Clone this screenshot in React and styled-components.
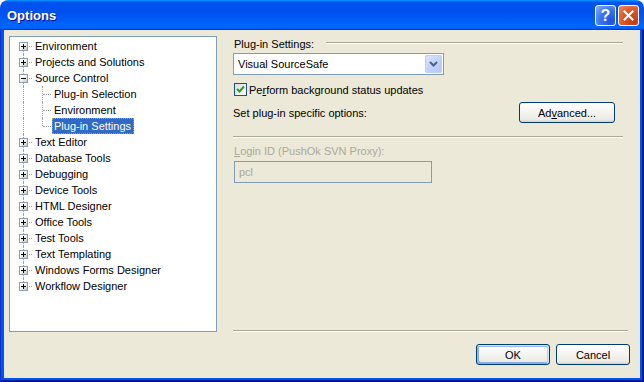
import React from "react";
import styled, { createGlobalStyle, css } from "styled-components";

const GlobalStyle = createGlobalStyle`
  html, body {
    margin: 0;
    padding: 0;
    background: #ffffff;
  }
  body {
    font-family: "Liberation Sans", Arial, sans-serif;
    font-size: 11px;
    color: #000000;
  }
  * {
    box-sizing: border-box;
  }
`;

const treeItems = [
  { label: "Environment", expander: "plus" },
  { label: "Projects and Solutions", expander: "plus" },
  {
    label: "Source Control",
    expander: "minus",
    children: [
      { label: "Plug-in Selection" },
      { label: "Environment" },
      { label: "Plug-in Settings", selected: true },
    ],
  },
  { label: "Text Editor", expander: "plus" },
  { label: "Database Tools", expander: "plus" },
  { label: "Debugging", expander: "plus" },
  { label: "Device Tools", expander: "plus" },
  { label: "HTML Designer", expander: "plus" },
  { label: "Office Tools", expander: "plus" },
  { label: "Test Tools", expander: "plus" },
  { label: "Text Templating", expander: "plus" },
  { label: "Windows Forms Designer", expander: "plus" },
  { label: "Workflow Designer", expander: "plus" },
];

const App = () => (
  <>
    <GlobalStyle />
    <Window>
      <TitleBar>
        <Title>Options</Title>
        <CaptionButtons>
          <CaptionButton $variant="help">?</CaptionButton>
          <CaptionButton $variant="close">
            <svg width="11" height="11" viewBox="0 0 11 11">
              <path d="M1.5 1.5 L9.5 9.5 M9.5 1.5 L1.5 9.5" stroke="#fff" strokeWidth="2" strokeLinecap="square" />
            </svg>
          </CaptionButton>
        </CaptionButtons>
      </TitleBar>
      <Frame>
        <Client>
          <TreePanel>
            {treeItems.map((item, i) => {
              const first = i === 0;
              const last = i === treeItems.length - 1;
              return (
                <React.Fragment key={item.label + i}>
                  <Row>
                    <Slot $first={first} $last={last} $branch>
                      <Expander $minus={item.expander === "minus"} />
                    </Slot>
                    <Label>{item.label}</Label>
                  </Row>
                  {item.children &&
                    item.children.map((child, j) => (
                      <Row key={child.label + j}>
                        <Slot $guide={!last} />
                        <Slot $last={j === item.children.length - 1} $branch />
                        <Label $selected={child.selected}>{child.label}</Label>
                      </Row>
                    ))}
                </React.Fragment>
              );
            })}
          </TreePanel>
          <RightPane>
            <GroupHeader>
              <span>Plug-in Settings:</span>
              <Etch />
            </GroupHeader>
            <Combo>
              <ComboText>Visual SourceSafe</ComboText>
              <ComboButton>
                <svg width="9" height="6" viewBox="0 0 9 6">
                  <path d="M1 1 L4.5 4.5 L8 1" stroke="#4D6185" strokeWidth="2" fill="none" />
                </svg>
              </ComboButton>
            </Combo>
            <CheckRow>
              <CheckBox>
                <svg width="9" height="9" viewBox="0 0 9 9">
                  <path d="M1 4 L3.5 6.5 L8 1.5" stroke="#21A121" strokeWidth="2" fill="none" />
                </svg>
              </CheckBox>
              <span>
                Pe<u>r</u>form background status updates
              </span>
            </CheckRow>
            <OptionRow>
              <span>Set plug-in specific options:</span>
              <Button $w={96}>
                Ad<u>v</u>anced...
              </Button>
            </OptionRow>
            <Etch $block $end={7} $top={13} />
            <DisabledLabel>
              <u>L</u>ogin ID (PushOk SVN Proxy):
            </DisabledLabel>
            <DisabledInput>pcl</DisabledInput>
            <Spacer />
            <Etch $block $end={2} />
            <ButtonRow>
              <Button $w={74} $default>
                OK
              </Button>
              <Button $w={74}>Cancel</Button>
            </ButtonRow>
          </RightPane>
        </Client>
      </Frame>
    </Window>
  </>
);

const Window = styled.div`
  width: 644px;
  height: 382px;
  display: flex;
  flex-direction: column;
`;

const TitleBar = styled.div`
  height: 30px;
  flex: none;
  display: flex;
  align-items: center;
  justify-content: space-between;
  padding: 1px 5px 0 7px;
  border-radius: 8px 8px 0 0;
  background: linear-gradient(
    180deg,
    #0997ff,
    #0053ee 8%,
    #0050ee 40%,
    #0066ff 88%,
    #0066ff 93%,
    #005bff 95%,
    #003dd7 96%,
    #003dd7
  );
`;

const Title = styled.span`
  color: #ffffff;
  font-family: "Liberation Sans", Arial, sans-serif;
  font-weight: bold;
  font-size: 13px;
  text-shadow: 1px 1px #0f1089;
`;

const CaptionButtons = styled.div`
  display: flex;
  gap: 2px;
`;

const CaptionButton = styled.span`
  width: 21px;
  height: 21px;
  border: 1px solid #ffffff;
  border-radius: 3px;
  display: flex;
  align-items: center;
  justify-content: center;
  color: #ffffff;
  font-family: "Liberation Sans", Arial, sans-serif;
  font-weight: bold;
  font-size: 16px;
  ${p =>
    p.$variant === "close"
      ? css`
          background: radial-gradient(circle at 80% 80%, #c23a10 0%, #dd5a25 55%, #e98d6a 100%);
        `
      : css`
          background: radial-gradient(circle at 80% 80%, #1f52e0 0%, #3b78f0 55%, #8db2f8 100%);
        `}
`;

const Frame = styled.div`
  flex: 1;
  display: flex;
  padding: 0 4px 4px 4px;
  background: #0055e5;
  box-shadow: inset 1px 0 #0831d9, inset -1px -1px #00138c, inset -2px -2px #001ea0;
`;

const Client = styled.div`
  flex: 1;
  display: flex;
  background: #ece9d8;
  padding: 6px 10px 13px 5px;
`;

const TreePanel = styled.div`
  width: 208px;
  height: 296px;
  flex: none;
  align-self: flex-start;
  background: #ffffff;
  border: 1px solid #7f9db9;
  padding: 1px 0 0 4px;
  overflow: hidden;
`;

const Row = styled.div`
  display: flex;
  align-items: center;
  height: 16px;
  white-space: nowrap;
`;

const Slot = styled.span`
  position: relative;
  width: 19px;
  height: 16px;
  flex: none;

  &::before {
    content: "";
    display: ${p => (p.$branch || p.$guide ? "block" : "none")};
    position: absolute;
    left: 9px;
    top: ${p => (p.$first ? "8px" : "0")};
    bottom: ${p => (p.$last ? "8px" : "0")};
    border-left: 1px dotted #a0a0a0;
  }

  &::after {
    content: "";
    display: ${p => (p.$branch ? "block" : "none")};
    position: absolute;
    left: 10px;
    top: 8px;
    width: 8px;
    border-top: 1px dotted #a0a0a0;
  }
`;

const Expander = styled.span`
  position: absolute;
  left: 5px;
  top: 4px;
  width: 9px;
  height: 9px;
  z-index: 1;
  border: 1px solid #8d9db4;
  background: linear-gradient(135deg, #ffffff 35%, #c8c4b4 100%);

  &::before {
    content: "";
    position: absolute;
    left: 1px;
    top: 3px;
    width: 5px;
    height: 1px;
    background: #000000;
  }

  &::after {
    content: "";
    display: ${p => (p.$minus ? "none" : "block")};
    position: absolute;
    left: 3px;
    top: 1px;
    width: 1px;
    height: 5px;
    background: #000000;
  }
`;

const Label = styled.span`
  height: 16px;
  line-height: 14px;
  padding: 0 2px 0 1px;
  border: 1px solid transparent;
  ${p =>
    p.$selected &&
    css`
      background: #316ac5;
      color: #ffffff;
      border: 1px dotted #ce953a;
    `}
`;

const RightPane = styled.div`
  flex: 1;
  margin-left: 16px;
  display: flex;
  flex-direction: column;
`;

const GroupHeader = styled.div`
  display: flex;
  align-items: flex-start;
  margin-top: 1px;
  height: 14px;
  line-height: 14px;
  padding-left: 1px;
`;

const Etch = styled.div`
  flex: ${p => (p.$block ? "none" : "1")};
  height: 2px;
  border-top: 1px solid #aca899;
  border-bottom: 1px solid #ffffff;
  margin: ${p => (p.$block ? `${p.$top || 0}px ${p.$end}px 0 0` : "5px 7px 0 12px")};
`;

const Combo = styled.div`
  display: flex;
  align-items: center;
  width: 211px;
  height: 22px;
  margin-top: 2px;
  padding: 1px;
  background: #ffffff;
  border: 1px solid #7f9db9;
`;

const ComboText = styled.span`
  flex: 1;
  padding-left: 3px;
`;

const ComboButton = styled.span`
  width: 17px;
  height: 18px;
  display: flex;
  align-items: center;
  justify-content: center;
  border: 1px solid #bccdf7;
  border-radius: 2px;
  background: linear-gradient(135deg, #dce6fd 0%, #c2d3fc 50%, #b3c7f6 100%);
`;

const CheckRow = styled.div`
  display: flex;
  align-items: center;
  gap: 2px;
  margin-top: 8px;
  height: 13px;
  padding-left: 1px;
`;

const CheckBox = styled.span`
  width: 13px;
  height: 13px;
  display: flex;
  align-items: center;
  justify-content: center;
  border: 1px solid #1c5180;
  background: linear-gradient(135deg, #dcdcd7, #ffffff);
`;

const OptionRow = styled.div`
  display: flex;
  align-items: center;
  justify-content: space-between;
  margin-top: 6px;
  padding-right: 15px;
  height: 21px;
`;

const Button = styled.span`
  width: ${p => p.$w}px;
  height: 21px;
  display: flex;
  align-items: center;
  justify-content: center;
  border: 1px solid #003c74;
  border-radius: 3px;
  background: linear-gradient(180deg, #ffffff, #ecebe5 86%, #d8d0c4);
  ${p =>
    p.$default &&
    css`
      box-shadow: inset -1px 1px #cee7ff, inset 1px 2px #98b8ea, inset -2px 2px #bcd4f6,
        inset 1px -1px #89ade4, inset 2px -2px #89ade4;
    `}
`;

const DisabledLabel = styled.div`
  margin-top: 6px;
  line-height: 14px;
  padding-left: 1px;
  color: #aca899;
`;

const DisabledInput = styled.div`
  margin: 3px 0 0 1px;
  width: 198px;
  height: 22px;
  line-height: 20px;
  padding-left: 4px;
  border: 1px solid #7f9db9;
  color: #aca899;
`;

const Spacer = styled.div`
  flex: 1;
`;

const ButtonRow = styled.div`
  display: flex;
  justify-content: flex-end;
  gap: 6px;
  margin-top: 12px;
`;

export default App;
